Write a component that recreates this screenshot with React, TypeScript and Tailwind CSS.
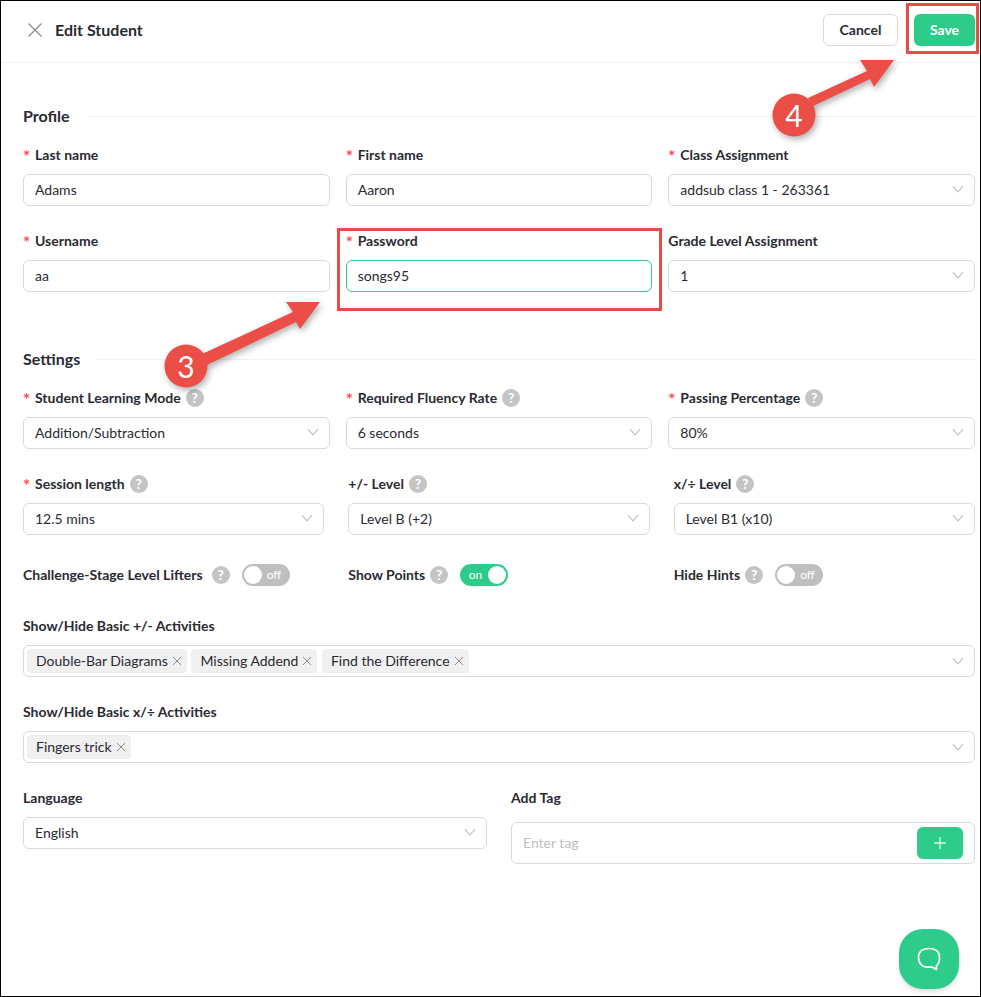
import React from "react";

const Chevron = () => (
  <svg width="12" height="8" viewBox="0 0 12 8" fill="none" className="shrink-0">
    <path d="M1 1.2 L6 6.8 L11 1.2" stroke="#bfbfbf" strokeWidth="1.1" />
  </svg>
);

const Help = () => (
  <span className="inline-flex h-[18px] w-[18px] shrink-0 items-center justify-center rounded-full bg-[#c4c4c4] text-[14px] font-bold leading-none text-white">
    ?
  </span>
);

const Label = ({ text, req, help }: { text: string; req?: boolean; help?: boolean }) => (
  <div className="mb-[8px] flex h-[22px] items-center text-[14px] font-bold leading-[22px] text-[#2a2a33]">
    {req && <span className="w-[12px] shrink-0 pt-[4px] text-[17px] font-bold leading-[18px] text-[#ff4d4f]">*</span>}
    <span>{text}</span>
    {help && (
      <span className="ml-[5px] flex">
        <Help />
      </span>
    )}
  </div>
);

const Box = ({ children, focus }: { children: React.ReactNode; focus?: boolean }) => (
  <div
    className={`flex h-[32px] items-center justify-between rounded-[6px] border bg-white pb-[2px] pl-[11px] pr-[10px] text-[14px] text-[#2a2a33] ${
      focus ? "border-[#2ecc8a]" : "border-[#d9d9d9]"
    }`}
  >
    {children}
  </div>
);

const Input = ({ label, value, req, focus }: { label: string; value: string; req?: boolean; focus?: boolean }) => (
  <div>
    <Label text={label} req={req} />
    <Box focus={focus}>
      <span>{value}</span>
    </Box>
  </div>
);

const Select = ({ label, value, req, help }: { label: string; value: string; req?: boolean; help?: boolean }) => (
  <div>
    <Label text={label} req={req} help={help} />
    <Box>
      <span>{value}</span>
      <Chevron />
    </Box>
  </div>
);

const Heading = ({ text }: { text: string }) => (
  <div className="mb-[17px] flex h-[22px] items-center">
    <span className="text-[16px] font-bold text-[#2a2a33]">{text}</span>
    <span className="ml-[16px] h-px flex-1 bg-[#f2f2f2]" />
  </div>
);

const Toggle = ({ on }: { on?: boolean }) => (
  <span
    className={`ml-[12px] flex h-[22px] w-[48px] shrink-0 items-center rounded-full text-[12px] text-white ${
      on ? "justify-end bg-[#2ecc8a] pr-[2px]" : "bg-[#bfbfbf] pl-[2px]"
    }`}
  >
    {on ? (
      <>
        <span className="mr-[6px] font-normal">on</span>
        <span className="h-[18px] w-[18px] rounded-full bg-white" />
      </>
    ) : (
      <>
        <span className="h-[18px] w-[18px] rounded-full bg-white" />
        <span className="ml-[5px] font-normal">off</span>
      </>
    )}
  </span>
);

const SwitchField = ({ label, on, wide }: { label: string; on?: boolean; wide?: boolean }) => (
  <div className="flex h-[22px] items-center text-[14px] font-bold text-[#2a2a33]">
    <span className="pb-[2px]">{label}</span>
    <span className={`flex ${wide ? "ml-[9px]" : "ml-[5px]"}`}>
      <Help />
    </span>
    <Toggle on={on} />
  </div>
);

const Tag = ({ text }: { text: string }) => (
  <span className="flex h-[24px] items-center rounded-[4px] bg-[#f0f0f0] pb-[2px] pl-[9px] pr-[4px] text-[14px] text-[#2a2a33]">
    {text}
    <svg width="10" height="10" viewBox="0 0 10 10" className="ml-[4px] mr-[1px] mt-[2px]">
      <path d="M1 1 L9 9 M9 1 L1 9" stroke="#8c8c8c" strokeWidth="1" />
    </svg>
  </span>
);

const MultiSelect = ({ label, tags }: { label: string; tags: string[] }) => (
  <div>
    <Label text={label} />
    <div className="flex h-[32px] items-center justify-between rounded-[6px] border border-[#d9d9d9] pl-[3px] pr-[10px]">
      <div className="flex gap-[4.5px]">
        {tags.map((t) => (
          <Tag key={t} text={t} />
        ))}
      </div>
      <Chevron />
    </div>
  </div>
);

export default function App() {
  return (
    <div
      className="relative h-[997px] w-[981px] overflow-hidden border border-black bg-white"
      style={{ fontFamily: "Lato, 'Noto Sans', sans-serif" }}
    >
      <header className="flex h-[62px] items-center justify-between border-b border-[#f0f0f0] pb-[4px] pl-[26px] pr-[5px]">
        <div className="flex items-center">
          <svg width="16" height="16" viewBox="0 0 16 16" className="mr-[12px]">
            <path d="M1.5 1.5 L14.5 14.5 M14.5 1.5 L1.5 14.5" stroke="#8c8c8c" strokeWidth="1.3" />
          </svg>
          <span className="text-[16px] font-bold text-[#2a2a33]">Edit Student</span>
        </div>
        <div className="flex items-center gap-[16px]">
          <button className="h-[32px] w-[75px] rounded-[6px] border border-[#d9d9d9] bg-white text-[14px] font-bold text-[#2a2a33]">
            Cancel
          </button>
          <button className="h-[32px] w-[61px] rounded-[6px] bg-[#2ecc8a] text-[14px] font-bold text-white">
            Save
          </button>
        </div>
      </header>

      <main className="pl-[22px] pr-[5px] pt-[42px]">
        <Heading text="Profile" />
        <div className="grid grid-cols-3 gap-x-[16px] gap-y-[24px]">
          <Input label="Last name" value="Adams" req />
          <Input label="First name" value="Aaron" req />
          <Select label="Class Assignment" value="addsub class 1 - 263361" req />
          <Input label="Username" value="aa" req />
          <Input label="Password" value="songs95" req focus />
          <Select label="Grade Level Assignment" value="1" />
        </div>

        <div className="mt-[56px]">
          <Heading text="Settings" />
        </div>
        <div className="grid grid-cols-3 gap-x-[16px]">
          <Select label="Student Learning Mode" value="Addition/Subtraction" req help />
          <Select label="Required Fluency Rate" value="6 seconds" req help />
          <Select label="Passing Percentage" value="80%" req help />
        </div>
        <div className="mt-[24px] grid grid-cols-3 gap-x-[24px]">
          <Select label="Session length" value="12.5 mins" req help />
          <Select label="+/- Level" value="Level B (+2)" help />
          <Select label="x/÷ Level" value="Level B1 (x10)" help />
        </div>
        <div className="mt-[29px] grid grid-cols-3 gap-x-[24px]">
          <SwitchField label="Challenge-Stage Level Lifters" wide />
          <SwitchField label="Show Points" on />
          <SwitchField label="Hide Hints" />
        </div>
        <div className="mt-[29px]">
          <MultiSelect
            label="Show/Hide Basic +/- Activities"
            tags={["Double-Bar Diagrams", "Missing Addend", "Find the Difference"]}
          />
        </div>
        <div className="mt-[24px]">
          <MultiSelect label="Show/Hide Basic x/÷ Activities" tags={["Fingers trick"]} />
        </div>
        <div className="mt-[24px] grid grid-cols-2 gap-x-[24px]">
          <Select label="Language" value="English" />
          <div>
            <Label text="Add Tag" />
            <div className="mt-[13px] flex h-[42px] items-center justify-between rounded-[6px] border border-[#d9d9d9] pl-[11px] pr-[11px]">
              <span className="pb-[2px] text-[14px] text-[#bfbfbf]">Enter tag</span>
              <span className="flex h-[32px] w-[46px] items-center justify-center rounded-[6px] bg-[#2ecc8a]">
                <svg width="12" height="12" viewBox="0 0 12 12">
                  <path d="M6 0 V12 M0 6 H12" stroke="#ffffff" strokeOpacity="0.8" strokeWidth="1.3" />
                </svg>
              </span>
            </div>
          </div>
        </div>
      </main>

      <span className="absolute left-[898px] top-[928px] flex h-[60px] w-[60px] items-center justify-center rounded-[24px] bg-[#2ecc8a] shadow-md">
        <svg width="28" height="28" viewBox="0 0 28 28" fill="none">
          <path
            d="M14 3.5 C20.5 3.5 24.5 6 24.5 12.5 C24.5 17 23 19.5 21.5 20.5 L21.3 24.6 L17 22 C16 22.1 15 22.2 14 22.2 C7.5 22.2 3.5 19 3.5 12.5 C3.5 6 7.5 3.5 14 3.5 Z"
            stroke="#ffffff"
            strokeWidth="1.7"
            strokeLinejoin="round"
          />
        </svg>
      </span>

      {/* Red annotation frames */}
      <span className="absolute left-[336px] top-[227px] h-[83px] w-[325px] border-[3px] border-[#e84c46]" />
      <span className="absolute left-[905px] top-[2px] h-[51px] w-[73px] border-[3px] border-[#e84c46]" />

      {/* Annotation arrows */}
      <svg
        width="981"
        height="997"
        className="pointer-events-none absolute left-0 top-0"
        style={{ filter: "drop-shadow(2px 3px 3px rgba(0,0,0,0.3))" }}
      >
        <path d="M201 353 L292 311 L285 301 L319 301 L299 328 L295 321 L206 364 Z" fill="#eb4d47" />
        <circle cx="185" cy="365" r="21.5" fill="#eb4d47" />
        <path d="M807 97 L866 70 L859 59 L893 59 L873 86 L869 78 L812 105 Z" fill="#eb4d47" />
        <circle cx="793" cy="114" r="21.5" fill="#eb4d47" />
      </svg>
      <span className="absolute left-[164px] top-[344px] flex h-[42px] w-[42px] items-center justify-center text-[30px] leading-none text-white">
        3
      </span>
      <span className="absolute left-[772px] top-[93px] flex h-[42px] w-[42px] items-center justify-center text-[30px] leading-none text-white">
        4
      </span>
    </div>
  );
}
